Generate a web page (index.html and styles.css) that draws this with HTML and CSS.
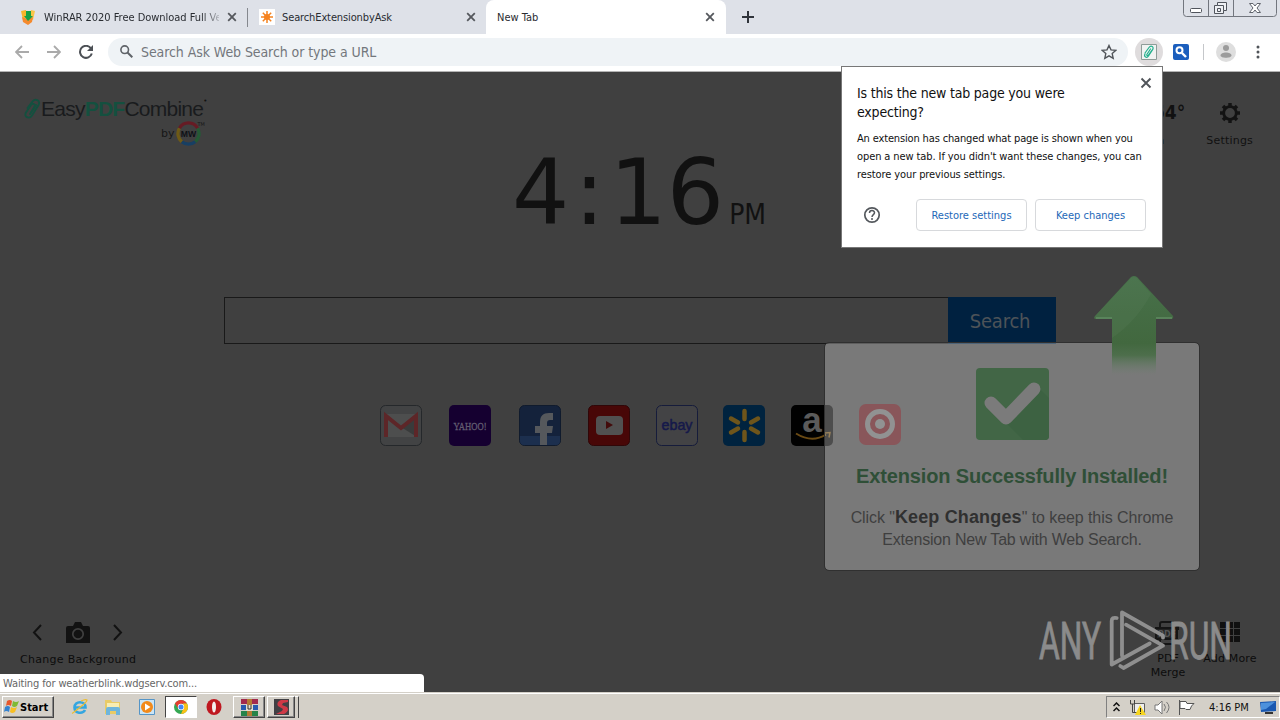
FILE: index.html
```
<!DOCTYPE html>
<html lang="en">
<head>
    <meta charset="UTF-8">
    <meta name="viewport" content="width=device-width, initial-scale=1.0">
    <title>New Tab</title>
    <link rel="stylesheet" href="styles.css">
</head>
<body>
    <div class="tab-strip">
        <div class="tab first">
            <svg class="favicon" width="16" height="16" viewBox="0 0 16 16"><path d="M1 2l5-1 1 8-4 2z" fill="#f9b52b"/><path d="M11 1l4 1-2 9-4-1z" fill="#f9c548"/><path d="M2 8l5 2 6-2-1 5-4 3-5-3z" fill="#f58a2d"/><path d="M6 2h5v5h2l-5 5-4-5h2z" fill="#18a045"/></svg>
            <span class="tab-title fade">WinRAR 2020 Free Download Full Ve</span>
            <svg class="close" width="10" height="10" viewBox="0 0 10 10"><path d="M1.2 1.2l7.6 7.6M8.8 1.2L1.2 8.8"/></svg>
        </div>
        <div class="tab second">
            <svg class="favicon" width="16" height="16" viewBox="0 0 16 16"><path fill="#fff" d="M0 0h16v16H0z"/><path d="M8 2v12M2 8h12M3.800 3.800l8.400 8.400M12.200 3.800l-8.400 8.400" stroke="#f5821f" stroke-width="1.500"/><circle cx="8" cy="8" r="3" fill="#f5821f"/></svg>
            <span class="tab-title ask">SearchExtensionbyAsk</span>
            <svg class="close" width="10" height="10" viewBox="0 0 10 10"><path d="M1.2 1.2l7.6 7.6M8.8 1.2L1.2 8.8"/></svg>
        </div>
        <div class="tab active">
            <span class="tab-title new">New Tab</span>
            <svg class="close" width="10" height="10" viewBox="0 0 10 10"><path d="M1.2 1.2l7.6 7.6M8.8 1.2L1.2 8.8"/></svg>
        </div>
        <svg class="plus" width="12" height="12" viewBox="0 0 12 12"><path d="M6 0v12M0 6h12" stroke="#30343b" stroke-width="2"/></svg>
        <svg class="window-buttons" width="94" height="17" viewBox="0 0 94 17" fill="none" stroke="#72767e">
            <path d="M.5 0v13.500q0 3 3 3h87q3 0 3-3V0M25.500 0v16M50.500 0v16"/>
            <rect x="7.500" y="8.500" width="11" height="4" rx="1" fill="#fff" stroke="#50545c"/>
            <path d="M34.500 2.500h9v8h-3v3h-9v-8h3z" fill="#eef0f4" stroke="#50545c"/>
            <path d="M34.500 5.500h6v5M34.500 8.500h3v3h-3z" stroke="#50545c"/>
            <path d="M66.500 3.500h3.500l2 2.500 2-2.500h3.500l-3.500 4.500 3.500 4.500H74l-2-2.500-2 2.500h-3.500l3.500-4.500z" fill="#fff" stroke="#60646c"/>
        </svg>
    </div>

    <div class="toolbar">
        <svg width="14" height="14" viewBox="0 0 14 14" class="nav back"><path d="M14 7H1M7 1L1 7l6 6"/></svg>
        <svg width="14" height="14" viewBox="0 0 14 14" class="nav forward"><path d="M0 7h13M7 1l6 6-6 6"/></svg>
        <svg width="14" height="14" viewBox="0 0 14 14" class="reload"><path d="M11.800 3.200A6 6 0 1 0 12.800 8.500" fill="none" stroke="#4c5055" stroke-width="2"/><path d="M14 0v6H8z" fill="#4c5055"/></svg>
        <div class="omnibox">
            <svg width="13" height="13" viewBox="0 0 13 13" fill="none" stroke="#5f6368"><circle cx="4.700" cy="4.700" r="3.800" stroke-width="1.600"/><path d="M7.500 7.500l4.800 4.800" stroke-width="2"/></svg>
            <span class="placeholder">Search Ask Web Search or type a URL</span>
            <svg class="star" width="16" height="16" viewBox="0 0 16 16"><path d="M8 1.500l2 4.400 4.700.5-3.500 3.200 1 4.700L8 11.900l-4.200 2.400 1-4.700L1.300 6.400 6 5.900z" fill="none" stroke="#505459" stroke-width="1.400"/></svg>
        </div>
        <div class="extension">
            <svg width="16" height="16" viewBox="0 0 16 16"><path d="M.5.5h15v15H.5z" fill="#f1f3f2" stroke="#8f9c98"/><path d="M4 9l4-5.500c2-2.800 5.400-.6 3.600 2.100L7.500 12c-1.700 2.500-5 .7-3.500-2M9.500 5L6 10.200c-.8 1.300.7 2 1.500.9l3.600-5" fill="none" stroke="#23b08d" stroke-width="1.200" stroke-linecap="round"/></svg>
        </div>
        <svg class="search-ext" width="16" height="16" viewBox="0 0 16 16"><rect width="16" height="16" rx="2" fill="#1b5ebd"/><circle cx="6.500" cy="6.300" r="3" fill="none" stroke="#fff" stroke-width="2"/><path d="M9 9l4 4" stroke="#fff" stroke-width="2.400"/></svg>
        <div class="divider"></div>
        <svg class="avatar" width="20" height="20" viewBox="0 0 20 20"><circle cx="10" cy="10" r="10" fill="#dedede"/><circle cx="10" cy="6" r="3" fill="#9b9b9b"/><path d="M4.500 13.500c0-4 11-4 11 0 0 3-11 3-11 0z" fill="#9b9b9b"/></svg>
        <svg class="dots" width="4" height="14" viewBox="0 0 4 14" fill="#505459"><circle cx="2" cy="2" r="1.500"/><circle cx="2" cy="7" r="1.500"/><circle cx="2" cy="12" r="1.500"/></svg>
    </div>

    <div class="page">
        <div class="header">
            <div class="brand">
                <div class="brand-name">
                    <svg width="17" height="22" viewBox="0 0 17 22" fill="none" stroke="#14503f" stroke-width="1.900" stroke-linecap="round"><path d="M3.500 10L8 4c3-4.500 9-1.500 6.500 3L8 17.500c-2.600 4-8.500 1.500-6-3L7 7c1.800-2.600 5-.7 3.300 2L6 16M12 7L6.500 15.500"/></svg>
                    <span class="wordmark">Easy<b>PDF</b>Combine</span><span class="tm">&#8226;</span>
                </div>
                <div class="by">
                    <span>by</span>
                    <svg width="26" height="26" viewBox="0 0 26 26" fill="none" stroke-width="3.400"><path d="M3.500 7.500A11 11 0 0 1 22.500 7.500" stroke="#661b24"/><path d="M22.500 7.500A11 11 0 0 1 20 21.500" stroke="#245a35"/><path d="M20 21.500A11 11 0 0 1 6 21.500" stroke="#173f63"/><path d="M6 21.500A11 11 0 0 1 3.500 7.500" stroke="#6e5a16"/><text x="13" y="16.200" text-anchor="middle" class="mw">MW</text></svg>
                    <span class="by-tm">TM</span>
                </div>
            </div>
            <div class="weather"><span class="degrees">54°</span><span class="city">n</span></div>
            <div class="settings">
                <svg width="22" height="22" viewBox="0 0 22 22"><circle cx="11" cy="11" r="6.300" fill="none" stroke="#131313" stroke-width="2.800"/><path d="M11 1v4M11 17v4M1 11h4M17 11h4M4 4l2.800 2.800M15.200 15.200L18 18M4 18l2.800-2.800M15.200 6.800L18 4" stroke="#131313" stroke-width="3.500"/></svg>
                <span>Settings</span>
            </div>
        </div>

        <div class="clock"><span class="time">4<i>:</i>16</span><span class="meridiem">PM</span></div>

        <div class="search">
            <div class="search-input"></div>
            <div class="search-button">Search</div>
        </div>

        <div class="shortcuts">
            <svg width="42" height="42" viewBox="0 0 42 42"><rect x=".5" y=".5" width="41" height="40" rx="5" fill="#424344" stroke="#25282b"/><path d="M5 9h32v23H5z" fill="#4d4e4e"/><path d="M21 22l16 10V12z" fill="#393b3b"/><path d="M6 32V11l15 12 15-12v21" fill="none" stroke="#5d2628" stroke-width="4"/></svg>
            <svg width="42" height="42" viewBox="0 0 42 42"><rect width="42" height="41" rx="5" fill="#150030"/><text x="21" y="25" text-anchor="middle" textLength="33" lengthAdjust="spacingAndGlyphs" class="yahoo">YAHOO!</text></svg>
            <svg width="42" height="42" viewBox="0 0 42 42"><rect x=".5" y=".5" width="41" height="40" rx="5" fill="#14223b" stroke="#101b2d"/><path d="M1 31h40v5q0 4-4 4H5q-4 0-4-4z" fill="#1c2f4e"/><path d="M21 40V28h-5v-7h5v-4c0-6 3-9 9-9h4v7h-3c-2 0-3 1-3 3v3h6l-1 7h-5v12z" fill="#55585c"/></svg>
            <svg width="42" height="42" viewBox="0 0 42 42"><rect x=".5" y=".5" width="41" height="40" rx="5" fill="#480707" stroke="#300708"/><rect x="8" y="11" width="27" height="19" rx="4" fill="#515151"/><path d="M18 16l7 4-7 4z" fill="#430b0b"/></svg>
            <svg width="42" height="42" viewBox="0 0 42 42"><rect x=".5" y=".5" width="41" height="40" rx="5" fill="#434345" stroke="#161c3b"/><text x="21" y="25" text-anchor="middle" textLength="31" lengthAdjust="spacingAndGlyphs" class="ebay">ebay</text></svg>
            <svg width="42" height="42" viewBox="0 0 42 42"><rect width="42" height="41" rx="5" fill="#00233f"/><path d="M21.500 6v8M21.500 27v8M8 13.500l7 4M28 23.500l7 4M8 27.500l7-4M28 17.500l7-4" stroke="#6e551b" stroke-width="4.500" stroke-linecap="round"/></svg>
            <svg width="42" height="42" viewBox="0 0 42 42"><rect width="42" height="41" rx="5" fill="#010101"/><text x="21" y="27" text-anchor="middle" class="amazon">a</text><path d="M5 28.500q16 10 30 1" fill="none" stroke="#6a4a14" stroke-width="2"/><path d="M34 28l5-.5-1 5" fill="none" stroke="#6a4a14" stroke-width="1.500"/></svg>
            <svg class="target" width="42" height="42" viewBox="0 0 42 42"><rect width="42" height="41" rx="7" fill="#570e13"/><circle cx="21" cy="20" r="12.500" fill="none" stroke="#626464" stroke-width="5"/><circle cx="21" cy="20" r="5" fill="#626464"/></svg>
        </div>

        <div class="footer">
            <div class="change-bg">
                <div class="bg-icons">
                    <svg width="10" height="17" viewBox="0 0 10 17"><path d="M9 1L2 8.500 9 16" fill="none" stroke="#121212" stroke-width="2"/></svg>
                    <svg width="24" height="21" viewBox="0 0 24 21"><path d="M2 4h5l2-4h6l2 4h5q2 0 2 2v15H0V6q0-2 2-2z" fill="#121212"/><circle cx="12" cy="12" r="5.200" fill="none" stroke="#404040" stroke-width="1.700"/></svg>
                    <svg width="10" height="17" viewBox="0 0 10 17"><path d="M1 1l7 7.500L1 16" fill="none" stroke="#121212" stroke-width="2"/></svg>
                </div>
                <span>Change Background</span>
            </div>
            <div class="tool pdf">
                <svg width="26" height="26" viewBox="0 0 26 26" fill="none" stroke="#151515" stroke-width="2"><path d="M5 7V4q0-2 2-2h11l5 5v3M5 19v3q0 2 2 2h14q2 0 2-2v-3"/><path d="M1 8h21v11H1z" fill="#242424"/><text x="12" y="17" text-anchor="middle" class="pdf-label">PDF</text></svg>
                <span>PDF<br>Merge</span>
            </div>
            <div class="tool more">
                <svg width="20" height="20" viewBox="0 0 20 20" fill="#101010"><path d="M0 0h6v6H0zM7 0h6v6H7zM14 0h6v6h-6zM0 7h6v6H0zM7 7h6v6H7zM14 7h6v6h-6zM0 14h6v6H0zM7 14h6v6H7zM14 14h6v6h-6z"/></svg>
                <span>Add More</span>
            </div>
        </div>

        <div class="installed">
            <svg width="73" height="72" viewBox="0 0 73 72"><rect width="73" height="72" rx="4" fill="#426646"/><path d="M31 56L63 20l10 10v38q0 4-4 4H47z" fill="#3d6242"/><path d="M15 35l15 15 28-29" fill="none" stroke="#7b7b7b" stroke-width="13" stroke-linecap="round" stroke-linejoin="round"/></svg>
            <h2>Extension Successfully Installed!</h2>
            <p><span class="line-one">Click "<b>Keep Changes</b>" to keep this Chrome</span><br><span class="line-two">Extension New Tab with Web Search.</span></p>
        </div>
        <svg class="arrow" width="80" height="100" viewBox="0 0 80 100">
            <defs><linearGradient id="arrow-fade" x1="0" y1="0" x2="0" y2="1"><stop offset="0" stop-color="#47714a"/><stop offset=".68" stop-color="#42683f"/><stop offset=".8" stop-color="#486d46" stop-opacity=".9"/><stop offset="1" stop-color="#68806a" stop-opacity="0"/></linearGradient></defs>
            <path d="M37 1q3-2 6 0l36 39q1 3-2 3H62v56H18V43H2q-3 0-1-3z" fill="url(#arrow-fade)"/>
            <path d="M37 2q3-2 6 0l14 16Q42 46 18 62V43H2q-3 0-1-3z" fill="#6b906d" opacity=".15"/>
            <path d="M2 42h16M62 42h16" stroke="#5f8b61" stroke-width="1.500"/>
        </svg>

        <svg class="watermark" width="196" height="62" viewBox="0 0 196 62">
            <text x="1" y="50" textLength="62" lengthAdjust="spacingAndGlyphs">ANY</text>
            <text x="131" y="50" textLength="63" lengthAdjust="spacingAndGlyphs">RUN</text>
            <path d="M78.700 9q-5-1-5 3v43.500l38-21M84 46.500V3.500l41 23.200v2M88 15.700l37 21L85.500 59l-3.200-2" fill="none" stroke="#8f8f8f" stroke-width="3.800" stroke-linejoin="round" stroke-linecap="round"/>
        </svg>
        <div class="status">Waiting for weatherblink.wdgserv.com...</div>
    </div>

    <div class="popup">
        <svg class="popup-close" width="12" height="12" viewBox="0 0 12 12"><path d="M1.500 1.500l9 9M10.500 1.500l-9 9" stroke="#505459" stroke-width="1.900"/></svg>
        <h1><span class="title-one">Is this the new tab page you were</span><br><span class="title-two">expecting?</span></h1>
        <p><span class="copy-one">An extension has changed what page is shown when you</span><br><span class="copy-two">open a new tab. If you didn't want these changes, you can</span><br><span class="copy-three">restore your previous settings.</span></p>
        <div class="popup-actions">
            <svg width="18" height="18" viewBox="0 0 18 18" fill="none" stroke="#54585d"><circle cx="9" cy="9" r="7.200" stroke-width="1.700"/><path d="M6.500 7c0-3.300 5-3.200 5-.2 0 1.900-2.500 1.900-2.500 4.200M9 12v2" stroke-width="1.500"/></svg>
            <div class="btn restore"><span>Restore settings</span></div>
            <div class="btn keep"><span>Keep changes</span></div>
        </div>
    </div>

    <div class="taskbar">
        <div class="start">
            <svg width="16" height="16" viewBox="0 0 16 16"><path d="M3 2q3-2 5 0L7 7Q4 5 2 7z" fill="#e8582b"/><path d="M9 2q3 2 6 0l-2 5q-3 2-5 0z" fill="#7fba36"/><path d="M1 8q3-2 5 0l-1 5q-3-2-5 0z" fill="#3482cf"/><path d="M7 8q3 2 6 0l-2 5q-3 2-5 0z" fill="#f8bf23"/></svg>
            <b>Start</b>
        </div>
        <svg class="ie" width="18" height="18" viewBox="0 0 18 18" fill="none"><path d="M4 9.500h10.500c0-7-11-7-11 0 0 6.500 8.500 6.500 10.500 2.500" stroke="#34a6e0" stroke-width="2.600"/><path d="M2 15C-2 17 17 5 16 2c-1-1-4 0-6 1" stroke="#edbd2e" stroke-width="1.300"/></svg>
        <svg class="folder" width="18" height="18" viewBox="0 0 18 18"><path d="M1 2h6l1 2h8v12H1z" fill="#e9cb66"/><path d="M3 5h12v6H3z" fill="#f8edb2"/><path d="M2 17v-6q0-2 2-2h10q2 0 2 2v6h-4v-4H6v4z" fill="#6eb5dc"/></svg>
        <svg class="player" width="16" height="16" viewBox="0 0 16 16"><path d="M.5.5h15v15H.5z" fill="#cbe5f6" stroke="#5595c7"/><circle cx="8" cy="8" r="6" fill="#f28a1b"/><path d="M6 4.500L11.500 8 6 11.500z" fill="#fff"/></svg>
        <div class="task pressed">
            <svg width="14" height="14" viewBox="0 0 14 14"><circle cx="7" cy="7" r="7" fill="#34a853"/><path d="M1 3.500A7 7 0 0 1 13 3.500L7 4 4.500 9z" fill="#e53e30"/><path d="M13 3.500A7 7 0 0 1 7 14l3-7-1-3.500z" fill="#fbc116"/><circle cx="7" cy="7" r="3.200" fill="#fff"/><circle cx="7" cy="7" r="2.500" fill="#4285f4"/></svg>
        </div>
        <svg class="opera" width="16" height="16" viewBox="0 0 16 16"><ellipse cx="8" cy="8" rx="7.500" ry="8" fill="#bf1820"/><ellipse cx="8" cy="8" rx="2" ry="5.500" fill="#f4eeee"/></svg>
        <div class="task winrar">
            <svg width="17" height="17" viewBox="0 0 17 17"><path d="M0 0h17v5H0z" fill="#a22a4d"/><path d="M0 6h17v5H0z" fill="#285ab0"/><path d="M0 12h17v5H0z" fill="#268449"/><path d="M6 0h5v17H6z" fill="#b47b34"/><path d="M5 6h7v6H5z" fill="#e4dfcf"/><path d="M7 6v4h3V6" fill="none" stroke="#33302a"/></svg>
        </div>
        <div class="task last">
            <svg width="15" height="16" viewBox="0 0 15 16"><path d="M0 0h15v16H0z" fill="#414044"/><path d="M14 1H7Q2 3 4 7l5 3-1 2-6 3h8q6-3 3-7L8 6l1-2 5-1z" fill="#cf3946"/></svg>
        </div>
        <div class="task-edge"></div>
        <div class="tray">
            <svg class="chevrons" width="7" height="10" viewBox="0 0 7 10"><path d="M.5 4l3-3 3 3M.5 9l3-3 3 3" fill="none" stroke="#111" stroke-width="1.500"/></svg>
            <svg class="network" width="17" height="17" viewBox="0 0 17 17"><path d="M5.500 4.500h10v9h-10z" fill="#eee" stroke="#606060"/><path d="M1.500 1v4h4V1M3.500 5v8.500h5" fill="none" stroke="#444"/><path d="M11 6l6 10H6z" fill="#f7d51e"/><path d="M11.500 9v4M11.500 14v1" stroke="#222"/></svg>
            <svg class="speaker" width="17" height="15" viewBox="0 0 17 15"><path d="M1 5h3l4-4v13l-4-4H1z" fill="#fff" stroke="#777"/><path d="M10 4q3 3 0 7M12.500 2q5 5 0 11" fill="none" stroke="#777"/></svg>
            <svg class="flag" width="17" height="16" viewBox="0 0 17 16"><path d="M1.500 1v15M2 2.500h6l1 2h7q-3 2-4 6H8l-1-1H2z" fill="#fff" stroke="#555"/></svg>
            <span>4:16 PM</span>
            <svg class="monitor" width="16" height="13" viewBox="0 0 16 13"><path d="M0 1l16-1v10L1 11z" fill="#1a58b0"/><path d="M1 2l14-1-9 7-5 1z" fill="#4d91dc"/><path d="M5 12h8" stroke="#333" stroke-width="2"/></svg>
        </div>
    </div>
</body>
</html>
```
FILE: styles.css
```
* {
    box-sizing: border-box;
}

body {
    margin: 0;
    width: 1280px;
    height: 720px;
    overflow: hidden;
    position: relative;
    display: flex;
    flex-direction: column;
    font-family: "DejaVu Sans Condensed", "DejaVu Sans", sans-serif;
    font-size: 11px;
    color: #111;
}

svg {
    display: block;
    flex: none;
}

span {
    white-space: nowrap;
}

/* browser */
.tab-strip {
    height: 34px;
    background: #dee1e8;
    display: flex;
    align-items: center;
}

.tab {
    height: 34px;
    display: flex;
    align-items: center;
    color: #292c31;
}

.tab.first {
    width: 248px;
    padding: 0 11px 0 20px;
    background: linear-gradient(#85888e, #85888e) 247px 8px / 1px 19px no-repeat;
}

.tab.second {
    width: 238px;
    padding: 0 10px 0 11px;
}

.tab.active {
    width: 240px;
    padding: 0 11px;
    background: #fff;
    border-radius: 8px 8px 0 0;
}

.tab-title {
    margin-left: 8px;
}

.fade {
    width: 175px;
    letter-spacing: -.03px;
    -webkit-mask-image: linear-gradient(to right, #000 158px, transparent 180px);
    mask-image: linear-gradient(to right, #000 158px, transparent 180px);
}

.ask {
    margin-left: 7px;
    letter-spacing: -.12px;
}

.new {
    margin-left: 0;
}

.close {
    margin-left: auto;
    stroke: #55585d;
    stroke-width: 1.800;
}

.plus {
    margin-left: 16px;
}

.window-buttons {
    margin-left: auto;
    margin-right: 3px;
    align-self: flex-start;
}

.toolbar {
    height: 38px;
    background: #fff;
    border-bottom: 1px solid #b4b4b4;
    display: flex;
    align-items: center;
    padding: 0 20px 2px 15px;
}

.nav {
    fill: none;
    stroke: #aaa;
    stroke-width: 1.800;
}

.forward {
    margin-left: 18px;
}

.reload {
    margin-left: 18px;
}

.omnibox {
    width: 1020px;
    height: 28px;
    margin-left: 15px;
    padding: 0 11px 0 12px;
    border-radius: 14px;
    background: #eff3f6;
    display: flex;
    align-items: center;
}

.placeholder {
    margin-left: 8px;
    font-size: 14px;
    letter-spacing: -.08px;
    color: #73777c;
}

.star {
    margin-left: auto;
}

.extension {
    width: 28px;
    height: 28px;
    margin-left: 7px;
    border-radius: 50%;
    background: #dfdcdd;
    display: flex;
    align-items: center;
    justify-content: center;
}

.search-ext {
    margin-left: 10px;
}

.divider {
    width: 1px;
    height: 16px;
    margin-left: 14px;
    background: #c5c7ca;
}

.avatar {
    margin-left: 12px;
}

.dots {
    margin-left: auto;
}

/* new tab page */
.page {
    height: 620px;
    position: relative;
    background: #404040;
    display: flex;
    flex-direction: column;
    font-family: "DejaVu Sans", sans-serif;
}

.header {
    height: 78px;
    display: flex;
    padding: 25px 27px 0 24px;
}

.brand {
    width: 185px;
}

.brand-name {
    height: 24px;
    display: flex;
    align-items: center;
}

.wordmark {
    font: 21px "Liberation Sans", sans-serif;
    letter-spacing: -.75px;
    color: #191b1d;
}

.wordmark b {
    color: #14503f;
}

.tm {
    font-size: 7px;
    align-self: flex-start;
}

.by {
    display: flex;
    padding-left: 137px;
    color: #171717;
    align-items: center;
}

.by svg {
    width: 25px;
    height: 25px;
    margin-left: 1px;
}

.mw {
    font: bold 9px "Liberation Sans", sans-serif;
    fill: #0e1016;
    stroke: none;
}

.by-tm {
    font-size: 5px;
    margin-left: -3px;
    align-self: flex-start;
}

.weather {
    width: 40px;
    margin-left: auto;
    margin-right: 21px;
    display: flex;
    flex-direction: column;
    align-items: flex-end;
}

.degrees {
    font: bold 19px/30px "DejaVu Sans Condensed", sans-serif;
    height: 37px;
}

.city {
    margin-right: 21px;
}

.settings {
    display: flex;
    flex-direction: column;
    align-items: center;
    padding-top: 5px;
}

.settings span {
    margin-top: 10px;
    letter-spacing: .2px;
}

.clock {
    height: 147px;
    display: flex;
    align-items: baseline;
    padding-left: 512px;
    color: #111;
}

.time {
    font-size: 90px;
    line-height: 86px;
}

.time i {
    font-style: normal;
    margin: 0 5px;
}

.meridiem {
    margin-left: 5px;
    font: 28px "DejaVu Sans Condensed", sans-serif;
}

.search {
    width: 832px;
    height: 47px;
    margin-left: 224px;
    display: flex;
}

.search-input {
    flex: 1;
    border: 1px solid #191919;
    border-right: 0;
}

.search-button {
    width: 108px;
    padding-right: 4px;
    background: #002140;
    color: #4d5358;
    font: 20px/48px "DejaVu Sans Condensed", sans-serif;
    letter-spacing: -.2px;
    text-align: center;
}

.shortcuts {
    margin: 61px 0 0 380px;
    display: flex;
    gap: 26px;
}

.shortcuts svg:nth-child(2),
.shortcuts svg:nth-child(4) {
    margin-left: 1px;
}

.shortcuts svg:nth-child(3) {
    margin-left: 2px;
}

.shortcuts svg:nth-child(6) {
    margin-left: -1px;
}

.shortcuts .target {
    margin-top: -1px;
}

.yahoo {
    font: 11px "Liberation Serif", serif;
    fill: #625d70;
    stroke: #625d70;
    stroke-width: .3;
}

.ebay {
    font: 15px "Liberation Sans", sans-serif;
    fill: #15194a;
    stroke: #15194a;
    stroke-width: .5;
}

.amazon {
    font: bold 35px "Liberation Sans", sans-serif;
    fill: #5b5b5b;
}

.footer {
    height: 72px;
    margin-top: auto;
    display: flex;
    color: #0c0c0c;
}

.change-bg {
    width: 116px;
    margin-left: 20px;
}

.bg-icons {
    height: 25px;
    margin-bottom: 8px;
    padding: 0 13px 0 12px;
    display: flex;
    align-items: center;
    justify-content: space-between;
}

.change-bg span {
    letter-spacing: .3px;
}

.tool {
    display: flex;
    flex-direction: column;
    align-items: center;
    text-align: center;
    line-height: 14px;
}

.pdf {
    margin-left: auto;
    width: 50px;
}

.pdf span {
    margin-top: 6px;
}

.pdf-label {
    font: bold 8px "DejaVu Sans", sans-serif;
    fill: #555;
    stroke: none;
}

.more {
    width: 60px;
    margin-right: 20px;
    margin-left: 7px;
    padding-top: 2px;
}

.more span {
    margin-top: 10px;
    letter-spacing: .15px;
}

.installed {
    position: absolute;
    left: 824px;
    top: 270px;
    width: 376px;
    height: 229px;
    border: 1px solid #303030;
    border-radius: 5px;
    background: rgba(255, 255, 255, .3);
    background-clip: padding-box;
    padding-top: 25px;
    display: flex;
    flex-direction: column;
    align-items: center;
    font-family: "Liberation Sans", sans-serif;
}

.installed h2 {
    margin: 24px 0 0;
    font-size: 20px;
    line-height: 24px;
    letter-spacing: -.15px;
    color: #2f4f37;
}

.installed p {
    margin: 18px 0 0;
    font-size: 16px;
    line-height: 22px;
    text-align: center;
    color: #3f3f3f;
}

.installed b {
    font-size: 18px;
    letter-spacing: .15px;
    color: #303030;
}

.line-one {
    letter-spacing: -.08px;
}

.line-two {
    letter-spacing: -.2px;
}

.arrow {
    position: absolute;
    left: 1094px;
    top: 204px;
}

.watermark {
    position: absolute;
    left: 1038px;
    top: 537px;
}

.watermark > text {
    font: 52px Roboto, sans-serif;
    fill: #8b8b8b;
    stroke: #8b8b8b;
    stroke-width: .9;
}

.status {
    position: absolute;
    left: 0;
    bottom: 0;
    width: 424px;
    height: 18px;
    padding-left: 3px;
    border-radius: 0 4px 0 0;
    background: #fff;
    font: 11px/19px "DejaVu Sans Condensed", sans-serif;
    letter-spacing: -.13px;
    color: #666;
}

/* settings bubble */
.popup {
    position: absolute;
    left: 841px;
    top: 66px;
    width: 322px;
    height: 182px;
    padding: 17px 16px 16px 15px;
    border: 1px solid #777;
    background: #fff;
}

.popup-close {
    position: absolute;
    right: 10px;
    top: 10px;
}

.popup h1 {
    margin: 0;
    font-size: 14px;
    font-weight: normal;
    line-height: 19px;
    letter-spacing: -.19px;
}

.popup p {
    margin: 8px 0 0;
    line-height: 18px;
    letter-spacing: -.1px;
}

.copy-one {
    letter-spacing: -.15px;
}

.popup-actions {
    display: flex;
    align-items: center;
    gap: 8px;
    margin-top: 15px;
    padding-left: 6px;
}

.popup-actions svg {
    margin-right: auto;
}

.btn {
    width: 111px;
    height: 32px;
    border: 1px solid #d7d9dc;
    border-radius: 4px;
    color: #2468b8;
    text-align: center;
    line-height: 31px;
}

/* taskbar */
.taskbar {
    height: 28px;
    background: #d4d0c8;
    border-top: 1px solid #d4d0c8;
    box-shadow: inset 0 1px #fff;
    display: flex;
    align-items: center;
    padding: 3px 0 2px 2px;
}

.start,
.task {
    height: 22px;
    display: flex;
    align-items: center;
    border: 1px solid;
    border-color: #fff #444 #444 #fff;
    box-shadow: inset -1px -1px #888;
}

.start {
    width: 52px;
    padding-left: 1px;
    color: #000;
}

.ie {
    margin-left: 17px;
}

.folder {
    margin-left: 15px;
}

.player {
    margin-left: 17px;
}

.task {
    width: 32px;
    justify-content: center;
}

.pressed {
    margin-left: 10px;
    background: #fff;
    border-color: #444 #fff #fff #444;
    box-shadow: none;
}

.opera {
    margin-left: 9px;
}

.winrar {
    margin-left: 11px;
}

.last {
    width: 28px;
    margin-left: 2px;
}

.task-edge {
    width: 4px;
    height: 22px;
    border-right: 1px solid #444;
    border-top: 1px solid #fff;
}

.tray {
    width: 174px;
    height: 22px;
    margin-left: auto;
    border: 1px solid;
    border-color: #808080 #fff #fff #808080;
    display: flex;
    align-items: center;
    padding-left: 6px;
}

.network {
    margin-left: 9px;
}

.speaker {
    margin-left: 8px;
}

.flag {
    margin-left: 7px;
}

.tray span {
    margin-left: 14px;
}

.monitor {
    margin-left: auto;
    margin-right: 3px;
}
```
